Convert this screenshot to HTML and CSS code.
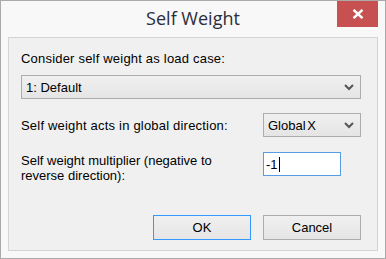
FILE: index.html
```html
<!DOCTYPE html>
<html lang="en">

<head>
    <meta charset="UTF-8">
    <title>Self Weight</title>
    <link rel="stylesheet" href="styles.css">
</head>

<body>
    <div class="window">
        <div class="titlebar">
            <span></span>
            <div class="title">Self Weight</div>
            <div class="close">
                <svg width="12" height="10" viewBox="0 0 12 10">
                    <path d="M1.5 0.8 L10.5 9.2 M10.5 0.8 L1.5 9.2" stroke="#fff" stroke-width="2.4" fill="none"/>
                </svg>
            </div>
        </div>

        <div class="client">
            <div class="label first">Consider self weight as load case:</div>
            <div class="select wide">
                <span>1: Default</span>
                <svg class="chev" width="10" height="7" viewBox="0 0 10 7">
                    <path d="M1 1 L5 5 L9 1" stroke="#555" stroke-width="2" fill="none"/>
                </svg>
            </div>

            <div class="row dir">
                <div class="label">Self weight acts in global direction:</div>
                <div class="select narrow">
                    <span>Global X</span>
                    <svg class="chev" width="10" height="7" viewBox="0 0 10 7">
                        <path d="M1 1 L5 5 L9 1" stroke="#555" stroke-width="2" fill="none"/>
                    </svg>
                </div>
            </div>

            <div class="row mult">
                <div class="label two">Self weight multiplier (negative to<br>reverse direction):</div>
                <div class="textbox"><span>-1</span><span class="caret"></span></div>
            </div>

            <div class="buttons">
                <div class="btn btn-ok">OK</div>
                <div class="btn">Cancel</div>
            </div>
        </div>
    </div>
</body>

</html>
```

FILE: styles.css
```css
body {
    margin: 0;
    font-family: "Liberation Sans", Arial, sans-serif;
    font-size: 13px;
    color: #000;
}

.window {
    width: 386px;
    height: 259px;
    box-sizing: border-box;
    border: 1px solid #aaaaaa;
    background-color: #f8f8f8;
}

.titlebar {
    display: grid;
    grid-template-columns: 1fr auto 1fr;
    height: 36px;
}

.title {
    font-family: "Open Sans", "Noto Sans", sans-serif;
    font-size: 18px;
    color: #2b2d3a;
    padding-top: 5px;
}

.close {
    justify-self: end;
    width: 41px;
    height: 26px;
    margin-right: 7px;
    background-color: #c75050;
    display: flex;
    align-items: center;
    justify-content: center;
}

.client {
    margin: 0 7px;
    height: 214px;
    box-sizing: border-box;
    border: 1px solid #d4d4d4;
    background-color: #f0f0f0;
    padding: 0 16px 0 12px;
}

.label {
    line-height: 15px;
    letter-spacing: 0.2px;
}

.label.first {
    padding-top: 13px;
}

.select {
    height: 24px;
    box-sizing: border-box;
    border: 1px solid #acacac;
    background: linear-gradient(#f0f0f0, #e5e5e5);
    display: flex;
    align-items: center;
    justify-content: space-between;
    padding: 0 6px 0 4px;
    font-size: 13px;
}

.select.wide {
    margin-top: 9px;
}

.select.narrow {
    width: 98px;
    word-spacing: -2px;
}

.row {
    display: flex;
    justify-content: space-between;
    align-items: center;
}

.row.dir {
    margin-top: 14px;
}

.row.mult {
    margin-top: 15px;
    align-items: flex-start;
}

.label.two {
    line-height: 15px;
    padding-top: 1px;
    letter-spacing: 0;
}

.textbox {
    width: 78px;
    height: 24px;
    margin-right: 20px;
    box-sizing: border-box;
    border: 1px solid #569de5;
    background-color: #fff;
    display: flex;
    align-items: center;
    padding-left: 2px;
    font-size: 13px;
}

.caret {
    width: 1px;
    height: 15px;
    background-color: #000;
    margin-left: 1px;
}

.buttons {
    display: flex;
    justify-content: flex-end;
    gap: 12px;
    margin-top: 32px;
}

.btn {
    width: 98px;
    height: 25px;
    box-sizing: border-box;
    border: 1px solid #acacac;
    background: linear-gradient(#f0f0f0, #e5e5e5);
    display: flex;
    align-items: center;
    justify-content: center;
    font-size: 13px;
}

.btn-ok {
    border-color: #3399ff;
}
```
